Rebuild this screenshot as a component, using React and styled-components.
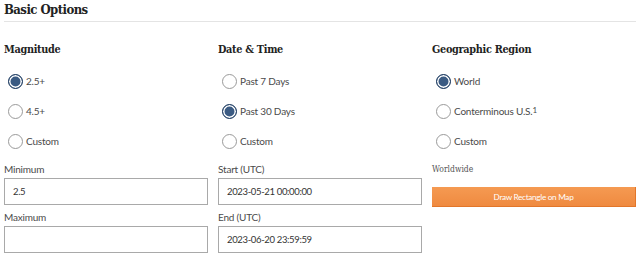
import React, { useState } from 'react';
import styled, { createGlobalStyle } from 'styled-components';

const GlobalStyle = createGlobalStyle`
    body {
        margin: 0;
        background: #ffffff;
        font-family: "Lato", "Noto Sans", sans-serif;
    }
`;

const serif = `"DejaVu Serif Condensed", "DejaVu Serif", "Liberation Serif", serif`;
const sans = `"Lato", "Noto Sans", sans-serif`;

const Page = styled.div`
    width: 640px;
    padding: 0 4px;
    box-sizing: border-box;
`;

const Title = styled.h2`
    font-family: ${serif};
    font-stretch: condensed;
    font-size: 13px;
    font-weight: bold;
    color: #222;
    margin: 0;
    line-height: 20px;
    letter-spacing: -0.55px;
`;

const Divider = styled.div`
    border-bottom: 1px solid #e4e4e4;
    margin-top: 1px;
`;

const Grid = styled.div`
    display: grid;
    grid-template-columns: repeat(3, 1fr);
    column-gap: 10px;
`;

const Column = styled.div`
    display: flex;
    flex-direction: column;
`;

const Heading = styled.h3`
    font-family: ${serif};
    font-stretch: condensed;
    font-size: 10.8px;
    font-weight: bold;
    color: #222;
    margin: 21px 0 9px;
    line-height: 14px;
    letter-spacing: -0.3px;
`;

const RadioRow = styled.label`
    display: flex;
    align-items: center;
    height: 30px;
    padding-left: 4px;
    font-size: 10px;
    letter-spacing: -0.2px;
    color: #4a4a4a;
    cursor: pointer;
`;

const Radio = styled.input.attrs({ type: 'radio' })`
    appearance: none;
    width: 15px;
    height: 15px;
    margin: 0 3px 0 0;
    border-radius: 50%;
    border: 1px solid #9a9a9a;
    background: #fff;
    box-sizing: border-box;
    &:checked {
        border: 1.5px solid #1d3a5f;
        background: #3b5b83;
        box-shadow: inset 0 0 0 1.5px #fff;
    }
`;

const Sup = styled.sup`
    font-size: 8px;
    line-height: 0;
    position: relative;
    top: -1px;
`;

const FieldLabel = styled.div`
    font-size: 10px;
    letter-spacing: -0.2px;
    line-height: 14px;
    color: #4a4a4a;
    margin-top: ${(p) => p.$top}px;
    margin-bottom: 2px;
`;

const Input = styled.input`
    height: 27px;
    width: 100%;
    box-sizing: border-box;
    border: 1px solid #a9a9a9;
    padding: 0 8px;
    font-family: ${sans};
    font-size: 9.5px;
    letter-spacing: -0.35px;
    color: #333;
    outline: none;
`;

const Note = styled.div`
    font-family: ${serif};
    font-stretch: condensed;
    font-size: 8.5px;
    line-height: 14px;
    color: #555;
    margin-top: 6px;
`;

const MapButton = styled.button`
    margin-top: 11px;
    height: 20px;
    width: 100%;
    border: none;
    border-right: 1px solid #e2762a;
    border-bottom: 1px solid #e2762a;
    background: linear-gradient(#f59a52, #ef8a40);
    color: #fff;
    font-family: ${sans};
    font-size: 8.2px;
    letter-spacing: -0.3px;
    cursor: pointer;
`;

const magnitudes = ['2.5+', '4.5+', 'Custom'];
const dates = ['Past 7 Days', 'Past 30 Days', 'Custom'];
const regions = ['World', 'Conterminous U.S.', 'Custom'];

function RadioGroup({ name, options, value, onChange }) {
    return options.map((opt) => (
        <RadioRow key={opt}>
            <Radio name={name} checked={value === opt} onChange={() => onChange(opt)} />
            {opt}
            {opt === 'Conterminous U.S.' && <Sup>1</Sup>}
        </RadioRow>
    ));
}

export default function App() {
    const [mag, setMag] = useState('2.5+');
    const [date, setDate] = useState('Past 30 Days');
    const [region, setRegion] = useState('World');

    return (
        <Page>
            <GlobalStyle />
            <Title>Basic Options</Title>
            <Divider />
            <Grid>
                <Column>
                    <Heading>Magnitude</Heading>
                    <RadioGroup name="mag" options={magnitudes} value={mag} onChange={setMag} />
                    <FieldLabel $top={6}>Minimum</FieldLabel>
                    <Input defaultValue="2.5" />
                    <FieldLabel $top={5}>Maximum</FieldLabel>
                    <Input defaultValue="" />
                </Column>
                <Column>
                    <Heading>Date &amp; Time</Heading>
                    <RadioGroup name="date" options={dates} value={date} onChange={setDate} />
                    <FieldLabel $top={6}>Start (UTC)</FieldLabel>
                    <Input defaultValue="2023-05-21 00:00:00" />
                    <FieldLabel $top={5}>End (UTC)</FieldLabel>
                    <Input defaultValue="2023-06-20 23:59:59" />
                </Column>
                <Column>
                    <Heading>Geographic Region</Heading>
                    <RadioGroup name="region" options={regions} value={region} onChange={setRegion} />
                    <Note>Worldwide</Note>
                    <MapButton>Draw Rectangle on Map</MapButton>
                </Column>
            </Grid>
        </Page>
    );
}
